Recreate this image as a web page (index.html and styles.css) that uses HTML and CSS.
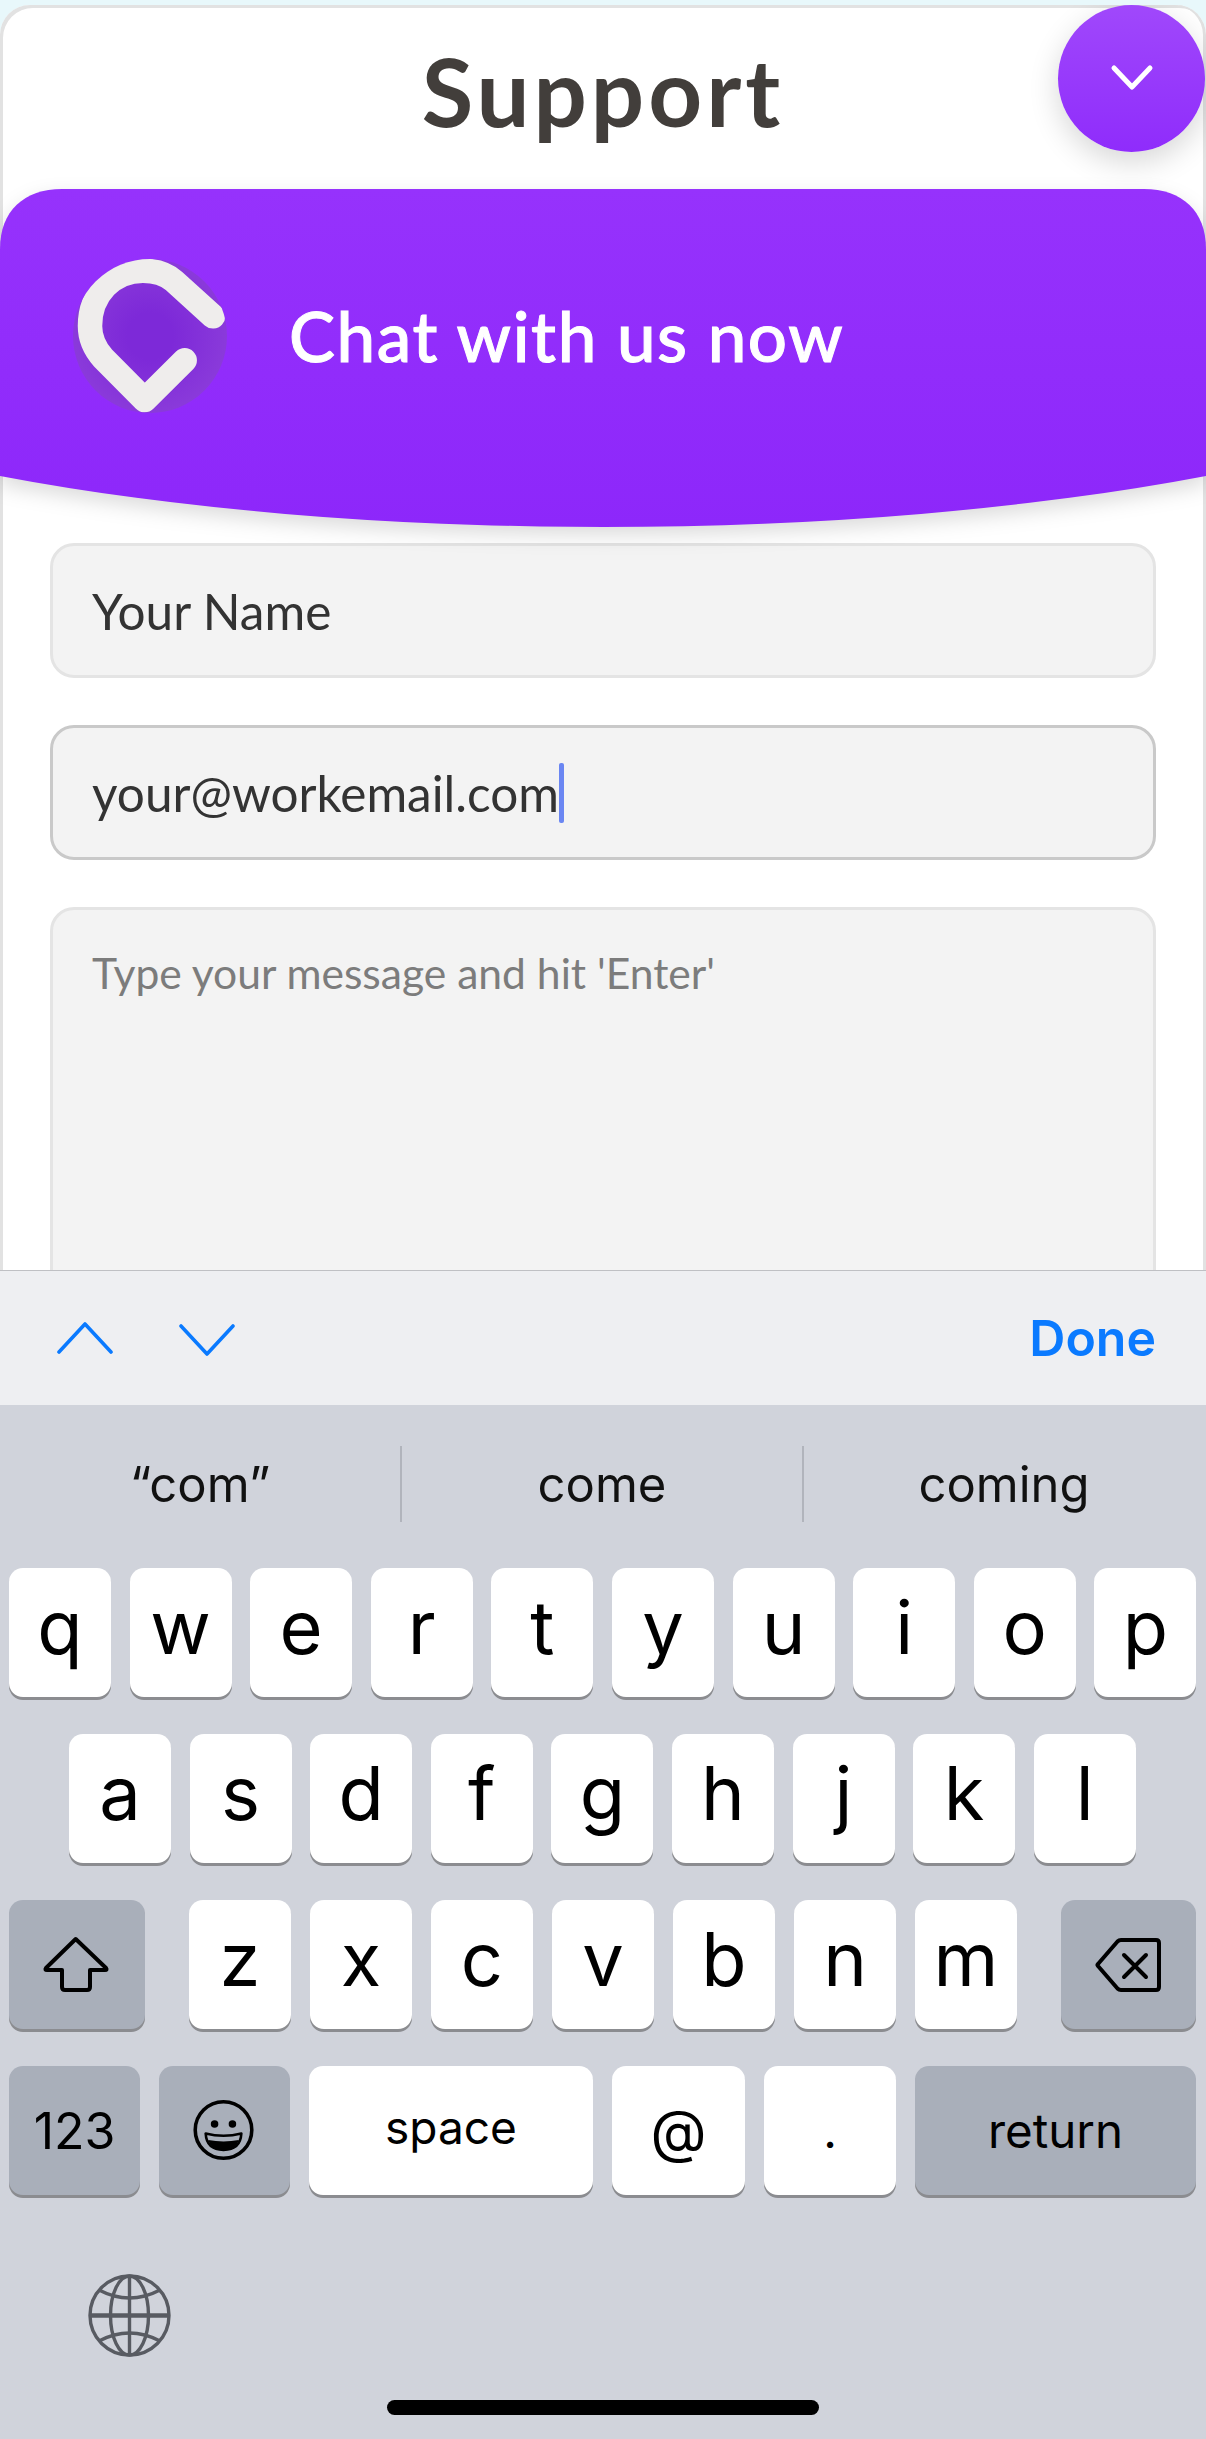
FILE: index.html
```html
<!DOCTYPE html>
<html lang="en">
<head>
  <meta charset="UTF-8">
  <title>Support</title>
  <link rel="stylesheet" href="styles.css">
</head>
<body>
  <div class="page">
    <div class="support-card">
      <h1 class="title">Support</h1>

      <div class="chat-head">
        <div class="chat-head-bg"></div>
        <svg class="logo" viewBox="0 0 154 154">
          <defs>
            <radialGradient id="logoBg">
              <stop offset="0.3" stop-color="#7d29d8"/>
              <stop offset="1" stop-color="#8a3ada"/>
            </radialGradient>
            <clipPath id="logoClip"><circle cx="77" cy="77" r="77"/></clipPath>
          </defs>
          <circle cx="77" cy="77" r="77" fill="url(#logoBg)"/>
          <g clip-path="url(#logoClip)">
            <path d="M140 57.3 L101 22 C92 14 82 11.7 70 11.7 C40 11.7 17 35 17 67 C17 80 22 90 30 99 L71.7 141 L111.7 101.3" fill="none" stroke="#efedec" stroke-width="24.5" stroke-linecap="round" stroke-linejoin="round"/>
            <path d="M120 40 L148.3 49 V65.7 H131.7 Z" fill="#efedec"/>
          </g>
        </svg>
        <div class="chat-head-text">Chat with us now</div>
      </div>

      <form class="chat-form">
        <div class="field">Your Name</div>
        <div class="field focused">your@workemail.com<span class="caret"></span></div>
        <div class="field message">Type your message and hit 'Enter'</div>
      </form>

      <div class="collapse-btn">
        <svg viewBox="0 0 44 28" width="44" height="28">
          <path d="M4 4 L22 23 L40 4" fill="none" stroke="#fff" stroke-width="5" stroke-linecap="round" stroke-linejoin="round"/>
        </svg>
      </div>
    </div>

    <div class="toolbar">
      <svg class="nav-arrow" viewBox="0 0 56 32" width="56" height="32">
        <path d="M2 30 L28 2 L54 30" fill="none" stroke="#0a7aff" stroke-width="3.6" stroke-linecap="round" stroke-linejoin="round"/>
      </svg>
      <svg class="nav-arrow down" viewBox="0 0 56 32" width="56" height="32">
        <path d="M2 2 L28 30 L54 2" fill="none" stroke="#0a7aff" stroke-width="3.6" stroke-linecap="round" stroke-linejoin="round"/>
      </svg>
      <span class="done">Done</span>
    </div>

    <div class="keyboard">
      <div class="suggestions">
        <div class="suggestion">“com”</div>
        <div class="suggestion">come</div>
        <div class="suggestion">coming</div>
      </div>

      <div class="key-row">
        <div class="key">q</div><div class="key">w</div><div class="key">e</div><div class="key">r</div><div class="key">t</div>
        <div class="key">y</div><div class="key">u</div><div class="key">i</div><div class="key">o</div><div class="key">p</div>
      </div>

      <div class="key-row row-2">
        <div class="key">a</div><div class="key">s</div><div class="key">d</div><div class="key">f</div><div class="key">g</div>
        <div class="key">h</div><div class="key">j</div><div class="key">k</div><div class="key">l</div>
      </div>

      <div class="key-row row-3">
        <div class="key dark shift">
          <svg viewBox="0 0 136 130" width="136" height="130">
            <path d="M66.7 39 L37 68 Q35.5 70 38 70 H53 V87 Q53 90 56 90 H78 Q81 90 81 87 V70 H96 Q98.5 70 97 68 Z" fill="none" stroke="#000" stroke-width="4" stroke-linejoin="round"/>
          </svg>
        </div>
        <div class="key">z</div><div class="key">x</div><div class="key">c</div><div class="key">v</div>
        <div class="key">b</div><div class="key">n</div><div class="key">m</div>
        <div class="key dark backspace">
          <svg viewBox="0 0 135 130" width="135" height="130">
            <path d="M60 40 H95 Q98 40 98 43 V87 Q98 90 95 90 H60 Q58 90 56.5 88.5 L37 66 Q36 65 37 64 L56.5 41.5 Q58 40 60 40 Z" fill="none" stroke="#000" stroke-width="4" stroke-linejoin="round"/>
            <path d="M63 55 L85 77 M85 55 L63 77" fill="none" stroke="#000" stroke-width="4" stroke-linecap="round"/>
          </svg>
        </div>
      </div>

      <div class="key-row row-4">
        <div class="key dark small num">123</div>
        <div class="key dark emoji">
          <svg viewBox="0 0 132 130" width="131" height="130">
            <circle cx="65" cy="64" r="28.5" fill="none" stroke="#000" stroke-width="3.6"/>
            <circle cx="56" cy="58" r="3.8"/>
            <circle cx="74" cy="58" r="3.8"/>
            <path d="M47 67.5 Q65 72 83 67.5 Q82 84 65 84 Q48 84 47 67.5 Z" fill="none" stroke="#000" stroke-width="2.6" stroke-linejoin="round"/>
            <path d="M49.5 74 Q65 77 80.5 74 Q78 84 65 84 Q52 84 49.5 74 Z"/>
          </svg>
        </div>
        <div class="key small space">space</div>
        <div class="key small at">@</div>
        <div class="key small dot">.</div>
        <div class="key dark small return">return</div>
      </div>

      <div class="keyboard-foot">
        <svg class="globe" viewBox="0 0 83 83" width="83" height="83">
          <g fill="none" stroke="#585b62" stroke-width="3.4">
            <circle cx="41.5" cy="41.5" r="39.5"/>
            <ellipse cx="41.5" cy="41.5" rx="19" ry="39.5"/>
            <path d="M41.5 2 V81"/>
            <path d="M2 41.5 H81" stroke-width="4.4"/>
            <path d="M11 16 Q41.5 32 72 16"/>
            <path d="M11 67 Q41.5 51 72 67"/>
          </g>
        </svg>
      </div>

      <div class="home-bar"></div>
    </div>
  </div>
</body>
</html>
```

FILE: styles.css
```css
* {
  box-sizing: border-box;
}

html, body {
  margin: 0;
  padding: 0;
}

body {
  width: 1206px;
  height: 2439px;
  overflow: hidden;
  background-color: #e8f8fb;
  font-family: Lato, "Open Sans", sans-serif;
}

.page {
  display: flex;
  flex-direction: column;
  height: 2439px;
  padding-top: 5px;
}

/* top part, the web page behind the keyboard */
.support-card {
  position: relative;
  height: 1265px;
  overflow: hidden;
  background-color: #fff;
  border-radius: 30px 30px 0 0;
  box-shadow: inset 3px 3px 0 #e2e2e2, inset -3px 0 0 #e2e2e2;
}

.title {
  margin: 0;
  height: 184px;
  padding-top: 33px;
  text-align: center;
  font-size: 94px;
  font-weight: 700;
  line-height: 106px;
  letter-spacing: 4px;
  color: #423e3b;
}

.collapse-btn {
  position: absolute;
  top: 0;
  right: 1px;
  width: 147px;
  height: 147px;
  display: flex;
  align-items: center;
  justify-content: center;
  border-radius: 50%;
  background: linear-gradient(#a048fb, #8f2cfb);
  box-shadow: 0 10px 30px rgba(0, 0, 0, 0.16);
}

.collapse-btn svg {
  margin-top: -2px;
}

.chat-head {
  position: relative;
  height: 338px;
  padding: 70px 0 0 73px;
  display: flex;
  align-items: flex-start;
  filter: drop-shadow(0 8px 10px rgba(0, 0, 0, 0.14));
}

.chat-head-bg {
  position: absolute;
  left: 0;
  top: 0;
  width: 1206px;
  height: 338px;
  background: linear-gradient(#9632fc, #8d27fa);
  clip-path: path("M0 60 C0 22 24 0 62 0 L1144 0 C1182 0 1206 22 1206 60 L1206 287 A1000 252 0 0 1 0 287 Z");
}

.logo {
  position: relative;
  width: 154px;
  height: 154px;
  flex-shrink: 0;
}

.chat-head-text {
  position: relative;
  margin-left: 62px;
  height: 154px;
  line-height: 154px;
  font-size: 69px;
  font-weight: 500;
  letter-spacing: 1.6px;
  color: #fff;
  -webkit-text-stroke: 1px #fff;
}

.chat-form {
  display: flex;
  flex-direction: column;
  gap: 47px;
  padding: 16px 50px 0;
}

.field {
  height: 135px;
  flex-shrink: 0;
  padding: 0 39px;
  display: flex;
  align-items: center;
  background-color: #f3f3f3;
  border: 3px solid #e4e4e4;
  border-radius: 24px;
  font-size: 49.5px;
  color: #333;
}

.field.focused {
  border-color: #c9c9c9;
}

.field.message {
  height: 500px;
  align-items: flex-start;
  padding-top: 33px;
  line-height: 60px;
  font-size: 42.6px;
  color: #7c7c7c;
}

.caret {
  width: 5px;
  height: 60px;
  border-radius: 2px;
  background-color: #6a86f2;
}

/* ios keyboard */
.toolbar {
  height: 135px;
  flex-shrink: 0;
  display: flex;
  align-items: center;
  padding: 0 50px 0 57px;
  background-color: #eeeff2;
  border-top: 1px solid #bfc0c4;
}

.nav-arrow.down {
  margin-left: 66px;
  margin-top: 4px;
}

.done {
  margin-left: auto;
  font-family: Inter, "Liberation Sans", sans-serif;
  font-size: 50px;
  font-weight: 600;
  color: #0a7aff;
}

.keyboard {
  position: relative;
  flex: 1;
  background-color: #d0d3db;
  font-family: Inter, "Liberation Sans", sans-serif;
  color: #000;
}

.suggestions {
  display: flex;
  height: 163px;
  padding-top: 41px;
}

.suggestion {
  width: 402px;
  height: 76px;
  display: flex;
  align-items: center;
  justify-content: center;
  border-left: 2px solid #b1b4bc;
  font-size: 49px;
  color: #111;
}

.suggestion:first-child {
  width: 400px;
  border-left: none;
}

.key-row {
  display: flex;
  gap: 18.6px;
  height: 129px;
  margin-bottom: 37px;
  padding-left: 9px;
}

.row-2 {
  padding-left: 69px;
}

.row-3 {
  gap: 19px;
}

.key {
  width: 102px;
  height: 129px;
  flex-shrink: 0;
  display: flex;
  align-items: center;
  justify-content: center;
  padding-bottom: 12px;
  background-color: #fff;
  border-radius: 14px;
  box-shadow: 0 3px 0 #8b8c90;
  font-size: 74px;
  line-height: 1;
}

.key.dark {
  background-color: #a9afba;
}

.key svg {
  display: block;
  flex-shrink: 0;
}

.key.shift,
.key.backspace,
.key.emoji {
  padding: 0;
}

.key.shift {
  width: 136px;
  margin-right: 25px;
}

.key.backspace {
  width: 135px;
  margin-left: 25px;
}

.key.small {
  font-size: 47.5px;
  padding-bottom: 0;
}

.row-4 {
  gap: 19px;
}

.key.num { width: 131px; font-size: 50px; }
.key.emoji { width: 131px; }
.key.space { width: 284px; padding-bottom: 8px; font-size: 46px; }
.key.at { width: 133px; font-size: 58px; }
.key.dot { width: 132px; }
.key.return { width: 281px; }

.keyboard-foot {
  padding: 42px 0 0 88px;
}

.globe {
  display: block;
}

.home-bar {
  position: absolute;
  left: 387px;
  bottom: 24px;
  width: 432px;
  height: 15px;
  border-radius: 8px;
  background-color: #000;
}
```
